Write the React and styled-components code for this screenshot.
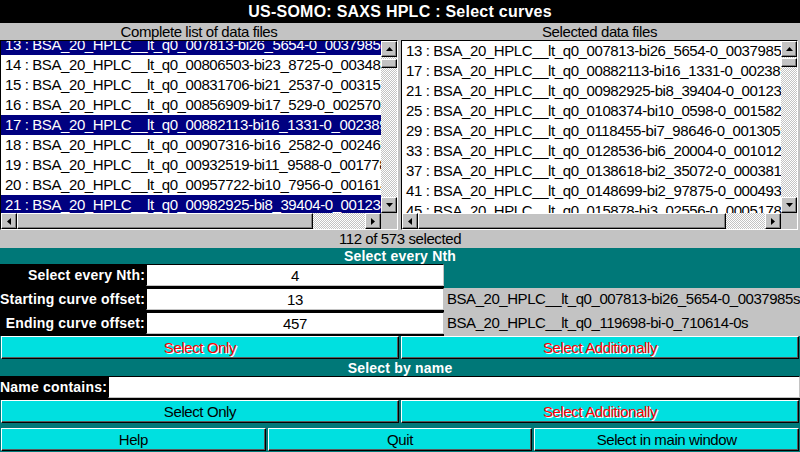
import React from 'react'
import styled, { createGlobalStyle } from 'styled-components'

const GRAY = '#c3c3c3'
const TEAL = '#007878'
const CYAN = '#00e0e0'
const NAVY = '#000080'

const GlobalStyle = createGlobalStyle`
  html, body {
    margin: 0;
    padding: 0;
    background: ${TEAL};
  }
  body {
    font-family: "Liberation Sans", Arial, sans-serif;
  }
  * { box-sizing: border-box; }
`

const Window = styled.div`
  width: 800px;
  height: 452px;
  display: flex;
  flex-direction: column;
  overflow: hidden;
  background: ${TEAL};
`

const TitleBar = styled.div`
  height: 23px;
  background: #000;
  color: #fff;
  font-weight: bold;
  font-size: 16px;
  letter-spacing: 0.25px;
  line-height: 23px;
  text-align: center;
`

const ListsArea = styled.div`
  display: grid;
  grid-template-columns: 398px 397px;
  column-gap: 3px;
  padding-right: 2px;
  background: ${GRAY};
`

const Panel = styled.div`
  display: flex;
  flex-direction: column;
`

const Caption = styled.div`
  height: 17px;
  line-height: 17px;
  font-size: 15px;
  letter-spacing: -0.4px;
  text-align: center;
  color: #000;
`

const ListFrame = styled.div`
  height: 190px;
  border: 1px solid;
  border-color: #000 #fff #fff #000;
  display: grid;
  grid-template-columns: 1fr 16px;
  grid-template-rows: 1fr 16px;
  background: #fff;
`

const Viewport = styled.div`
  overflow: hidden;
  background: #fff;
`

const Rows = styled.div`
  margin-top: ${p => -p.$offset}px;
`

const Row = styled.div`
  height: 20px;
  line-height: 20px;
  padding-left: 4px;
  font-size: 15px;
  letter-spacing: -0.4px;
  white-space: nowrap;
  color: ${p => (p.$selected ? '#fff' : '#000')};
  background: ${p => (p.$selected ? NAVY : '#fff')};
`

const raised = `
  background: ${GRAY};
  border: 1px solid;
  border-color: #fff #000 #000 #fff;
  box-shadow: inset -1px -1px #808080;
`

const VBar = styled.div`
  display: flex;
  flex-direction: column;
`

const HBar = styled.div`
  display: flex;
`

const ArrowButton = styled.div`
  ${raised}
  width: 16px;
  height: 16px;
  flex: none;
  display: flex;
  align-items: center;
  justify-content: center;
`

const Trough = styled.div`
  flex: 1;
  display: flex;
  flex-direction: ${p => (p.$vertical ? 'column' : 'row')};
  background: repeating-conic-gradient(${GRAY} 0% 25%, #fff 0% 50%) 0 0 / 2px 2px;
  padding-top: ${p => p.$pad || 0}px;
`

const Thumb = styled.div`
  ${raised}
  flex: none;
  width: ${p => p.$w}px;
  height: ${p => p.$h}px;
`

const Corner = styled.div`
  background: ${GRAY};
`

const Status = styled.div`
  height: 18px;
  line-height: 18px;
  background: ${GRAY};
  font-size: 15px;
  letter-spacing: -0.4px;
  text-align: center;
`

const SectionHeader = styled.div`
  height: ${p => p.$h}px;
  line-height: ${p => p.$h}px;
  background: ${TEAL};
  color: #fff;
  font-weight: bold;
  font-size: 14px;
  letter-spacing: 0.2px;
  text-align: center;
`

const FormGrid = styled.div`
  display: grid;
  grid-template-columns: ${p => p.$cols};
  grid-auto-rows: 24px;
`

const LabelCell = styled.div`
  background: #000;
  color: #fff;
  font-weight: bold;
  font-size: 14px;
  letter-spacing: 0.2px;
  line-height: 22px;
  text-align: right;
  padding-right: 1px;
  white-space: nowrap;
`

const FieldCell = styled.div`
  background: #000;
  padding-bottom: 2px;
`

const Field = styled.input`
  display: block;
  width: 100%;
  height: 100%;
  margin: 0;
  padding: 0 3px;
  border: 1px solid;
  border-color: #000 ${GRAY} ${GRAY} #000;
  background: #fff;
  outline: none;
  font-family: "Liberation Sans", Arial, sans-serif;
  font-size: 15px;
  letter-spacing: -0.4px;
  color: #000;
  text-align: ${p => p.$align || 'center'};
`

const NoteCell = styled.div`
  background: ${p => (p.$teal ? TEAL : GRAY)};
  font-size: 15px;
  letter-spacing: -0.45px;
  line-height: 22px;
  padding-left: 3px;
  white-space: nowrap;
  overflow: hidden;
`

const ButtonRow = styled.div`
  display: grid;
  grid-template-columns: repeat(${p => p.$count}, 1fr);
  column-gap: 2px;
  height: 24px;
  padding: 0 1px 1px;
  background: ${TEAL};
`

const Button = styled.button`
  margin: 0;
  padding: 0;
  background: ${CYAN};
  border: 1px solid;
  border-color: #fff #000 #000 #fff;
  box-shadow: inset -1px -1px #5a5a5a;
  font-family: "Liberation Sans", Arial, sans-serif;
  font-size: 15px;
  letter-spacing: -0.4px;
  color: ${p => (p.$red ? '#ff0000' : '#000')};
  text-shadow: ${p => (p.$red ? '1px 1px 0 #fff' : 'none')};
  cursor: pointer;
`

const Gap = styled.div`
  height: ${p => p.$h}px;
  background: ${TEAL};
`

const Arrow = ({ dir }) => {
  const pts = {
    up: '0,4 7,4 3.5,0',
    down: '0,0 7,0 3.5,4',
    left: '4,0 4,7 0,3.5',
    right: '0,0 0,7 4,3.5',
  }[dir]
  const vertical = dir === 'up' || dir === 'down'
  return (
    <svg width={vertical ? 7 : 4} height={vertical ? 4 : 7} viewBox={vertical ? '0 0 7 4' : '0 0 4 7'}>
      <polygon points={pts} fill="#000" />
    </svg>
  )
}

const leftRows = [
  [13, '007813-bi26_5654-0_0037985s', true],
  [14, '00806503-bi23_8725-0_0034855s', false],
  [15, '00831706-bi21_2537-0_0031578s', false],
  [16, '00856909-bi17_529-0_00257054s', false],
  [17, '00882113-bi16_1331-0_0023895s', true],
  [18, '00907316-bi16_2582-0_0024653s', false],
  [19, '00932519-bi11_9588-0_0017786s', false],
  [20, '00957722-bi10_7956-0_0016143s', false],
  [21, '00982925-bi8_39404-0_0012345s', true],
]

const rightRows = [
  [13, '007813-bi26_5654-0_0037985s'],
  [17, '00882113-bi16_1331-0_0023895s'],
  [21, '00982925-bi8_39404-0_0012345s'],
  [25, '0108374-bi10_0598-0_00158201s'],
  [29, '0118455-bi7_98646-0_00130591s'],
  [33, '0128536-bi6_20004-0_00101271s'],
  [37, '0138618-bi2_35072-0_00038162s'],
  [41, '0148699-bi2_97875-0_00049393s'],
  [45, '015878-bi3_02556-0_000517856s'],
]

const prefix = 'BSA_20_HPLC__lt_q0_'

const ListBox = ({ rows, offset, thumbPad, thumbWidth }) => (
  <ListFrame>
    <Viewport>
      <Rows $offset={offset}>
        {rows.map(([n, tail, sel]) => (
          <Row key={n} $selected={sel}>{`${n} : ${prefix}${tail}`}</Row>
        ))}
      </Rows>
    </Viewport>
    <VBar>
      <ArrowButton><Arrow dir="up" /></ArrowButton>
      <Trough $vertical $pad={thumbPad}>
        <Thumb $w={16} $h={9} />
      </Trough>
      <ArrowButton><Arrow dir="down" /></ArrowButton>
    </VBar>
    <HBar>
      <ArrowButton><Arrow dir="left" /></ArrowButton>
      <Trough>
        <Thumb $w={thumbWidth} $h={16} />
      </Trough>
      <ArrowButton><Arrow dir="right" /></ArrowButton>
    </HBar>
    <Corner />
  </ListFrame>
)

export default function App() {
  return (
    <>
      <GlobalStyle />
      <Window>
        <TitleBar>US-SOMO: SAXS HPLC : Select curves</TitleBar>
        <ListsArea>
          <Panel>
            <Caption>Complete list of data files</Caption>
            <ListBox rows={leftRows} offset={6} thumbPad={2} thumbWidth={296} />
          </Panel>
          <Panel>
            <Caption>Selected data files</Caption>
            <ListBox rows={rightRows} offset={0} thumbPad={1} thumbWidth={308} />
          </Panel>
        </ListsArea>
        <Status>112 of 573 selected</Status>
        <SectionHeader $h={16}>Select every Nth</SectionHeader>
        <FormGrid $cols="146px 298px 1fr">
          <LabelCell>Select every Nth:</LabelCell>
          <FieldCell><Field defaultValue="4" /></FieldCell>
          <NoteCell $teal />
          <LabelCell>Starting curve offset:</LabelCell>
          <FieldCell><Field defaultValue="13" /></FieldCell>
          <NoteCell>BSA_20_HPLC__lt_q0_007813-bi26_5654-0_0037985s</NoteCell>
          <LabelCell>Ending curve offset:</LabelCell>
          <FieldCell><Field defaultValue="457" /></FieldCell>
          <NoteCell>BSA_20_HPLC__lt_q0_119698-bi-0_710614-0s</NoteCell>
        </FormGrid>
        <ButtonRow $count={2}>
          <Button $red>Select Only</Button>
          <Button $red>Select Additionally</Button>
        </ButtonRow>
        <SectionHeader $h={16}>Select by name</SectionHeader>
        <FormGrid $cols="108px 1fr">
          <LabelCell>Name contains:</LabelCell>
          <FieldCell><Field defaultValue="" $align="left" /></FieldCell>
        </FormGrid>
        <ButtonRow $count={2}>
          <Button>Select Only</Button>
          <Button $red>Select Additionally</Button>
        </ButtonRow>
        <Gap $h={4} />
        <ButtonRow $count={3}>
          <Button>Help</Button>
          <Button>Quit</Button>
          <Button>Select in main window</Button>
        </ButtonRow>
      </Window>
    </>
  )
}
